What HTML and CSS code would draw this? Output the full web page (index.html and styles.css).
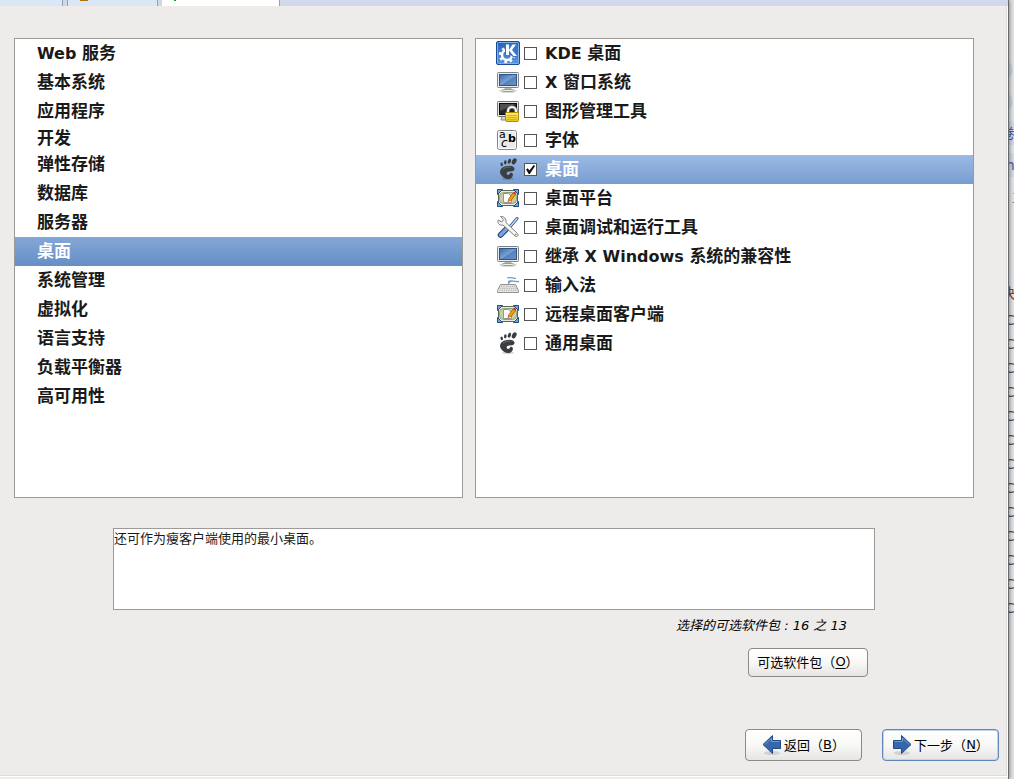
FILE: index.html
```html
<!DOCTYPE html>
<html lang="zh-CN">
<head>
  <meta charset="UTF-8">
  <meta name="viewport" content="width=device-width, initial-scale=1.0">
  <title>软件包选择</title>
  <link rel="stylesheet" href="styles.css">
</head>
<body>
  <!-- 图标 -->
  <svg class="icon-defs" aria-hidden="true">
    <defs>
      <linearGradient id="g-blue" x1="0" y1="0" x2="0" y2="1">
        <stop offset="0" stop-color="#2860b4"/>
        <stop offset="1" stop-color="#5c98dc"/>
      </linearGradient>
      <linearGradient id="g-screen" x1="0" y1="0" x2="1" y2="1">
        <stop offset="0" stop-color="#3a6cae"/>
        <stop offset="0.5" stop-color="#7ba0cf"/>
        <stop offset="0.55" stop-color="#5682bd"/>
        <stop offset="1" stop-color="#6b93c8"/>
      </linearGradient>
      <linearGradient id="g-gold" x1="0" y1="0" x2="0" y2="1">
        <stop offset="0" stop-color="#fdf07a"/>
        <stop offset="1" stop-color="#e6c010"/>
      </linearGradient>
    </defs>

    <symbol id="i-kde" viewBox="0 0 24 24">
      <rect x="0.5" y="0.5" width="23" height="23" rx="1.5" fill="url(#g-blue)" stroke="#1c4a94"/>
      <rect x="1.5" y="1.5" width="21" height="21" rx="1" fill="none" stroke="#84b2e8"/>
      <circle cx="11" cy="14" r="5" fill="none" stroke="#fff" stroke-width="2.4"/>
      <circle cx="11" cy="14" r="7" fill="none" stroke="#fff" stroke-width="2.4" stroke-dasharray="2.6 2.9"/>
      <path d="M9 3h12v13h-4l-3-2.500h-5z" fill="#3c75c4"/>
      <path d="M10 3.500h3v5.500l3.500-5.500h3.500l-4 5.500 5 6h-3.500l-4.500-5.500v4.500h-3z" fill="#fff"/>
    </symbol>

    <symbol id="i-monitor" viewBox="0 0 24 24">
      <ellipse cx="12" cy="21" rx="9" ry="2" fill="#000" opacity="0.14"/>
      <path d="M9 17.500h6l1 2.500H8z" fill="#b4b6b2"/>
      <rect x="6.500" y="19.500" width="11" height="2" rx="1" fill="#eeeeec" stroke="#9a9c98"/>
      <rect x="1.500" y="2.500" width="21" height="15" rx="1" fill="#eeeeec" stroke="#80827c"/>
      <rect x="3.500" y="4.500" width="17" height="11" fill="url(#g-screen)" stroke="#2c5590"/>
    </symbol>

    <symbol id="i-lock" viewBox="0 0 24 24">
      <path d="M6 17h7v4H5z" fill="#d3d5d0" stroke="#858783"/>
      <rect x="1.500" y="2.500" width="21" height="15" rx="1" fill="#e6e7e4" stroke="#73756f"/>
      <rect x="3.500" y="4.500" width="17" height="11" fill="#222625" stroke="#0c0e0d"/>
      <path d="M4 5h16L4 12z" fill="#4c5150"/>
      <path d="M12 14v-2a4 4 0 0 1 8 0v2" fill="none" stroke="#777" stroke-width="3.500"/>
      <path d="M12 14v-2a4 4 0 0 1 8 0v2" fill="none" stroke="#f2f2f0" stroke-width="2"/>
      <rect x="9.500" y="13.500" width="13" height="9" rx="1" fill="url(#g-gold)" stroke="#b58c00"/>
      <path d="M11 16.500h10M11 18.500h10M11 20.500h10" stroke="#d8b41c"/>
    </symbol>

    <symbol id="i-foot" viewBox="0 0 24 24">
      <ellipse cx="12" cy="21.800" rx="6" ry="1.500" fill="#000" opacity="0.160"/>
      <g fill="#3a3e40">
        <ellipse cx="18.200" cy="4.300" rx="2.100" ry="3.300" transform="rotate(28 18.200 4.300)"/>
        <ellipse cx="13.400" cy="4.200" rx="1.500" ry="2.500" transform="rotate(18 13.400 4.200)"/>
        <ellipse cx="9.300" cy="5.400" rx="1.300" ry="2.100" transform="rotate(5 9.300 5.400)"/>
        <ellipse cx="5.700" cy="7.400" rx="1.200" ry="1.900" transform="rotate(-8 5.700 7.400)"/>
        <path d="M18.500 11.800C18.200 8.200 12.500 8 8.500 9.600 4.500 11.200 3 14.500 4.800 17.500c2 3.600 6.700 5.700 9.700 4 2.400-1.400 3.100-4.200 1.800-5.300-1.200-1-2.300 0-2.800 1-.6 1.200-2.200 1-2.700-.2-.5-1.500.6-2.300 2.500-2.500 2.800-.3 5.300-.7 5.200-2.700z"/>
      </g>
      <path d="M7 12.500c1.500-2 4.500-2.700 7.500-2.200" fill="none" stroke="#6a6e70"/>
    </symbol>

    <symbol id="i-desktop" viewBox="0 0 24 24">
      <rect x="2.500" y="4.500" width="19" height="15" fill="#e9ecdf" stroke="#5c6658"/>
      <rect x="3.500" y="6.500" width="17" height="11" rx="4" fill="#c3d0a6" stroke="#8fa075"/>
      <path d="M1.500 3.500h5l-5 5zM22.500 3.500h-5l5 5zM1.500 20.500h5l-5-5zM22.500 20.500h-5l5-5z" fill="#7ba4d6" stroke="#1f4c88"/>
      <path d="M7.500 7.500h5l3 3v6h-8z" fill="#fff" stroke="#94968f"/>
      <path d="M12 15.500l1-3 4-5.500 2.500 1.500-4 5.500z" fill="#f79a1c" stroke="#b85a00" stroke-width="0.800"/>
      <path d="M17 7l2.500 1.500 .8-1.400-2-1.600z" fill="#d92b22"/>
    </symbol>

    <symbol id="i-tools" viewBox="0 0 24 24">
      <path d="M21 3.500l-8 9.500" stroke="#28558f" stroke-width="3" stroke-linecap="round"/>
      <path d="M21 3.500l-8 9.500" stroke="#c6d9ef" stroke-width="1.400" stroke-linecap="round"/>
      <path d="M10 14.500L4.500 20" stroke="#234b80" stroke-width="5.600" stroke-linecap="round"/>
      <path d="M10 14.500L4.500 20" stroke="#7ba5d8" stroke-width="3.400" stroke-linecap="round"/>
      <path d="M4.500 1.500l3 3.300-1.800 2.200-3.500-2C1 8.500 4 11 7 10l12 11c2 1.500 4-.5 2.500-2.500L10 7.500C10.500 4 8 1 4.500 1.500z" fill="#f4f4f2" stroke="#7e807c"/>
      <circle cx="19.800" cy="19.600" r="0.800" fill="#747672"/>
    </symbol>

    <symbol id="i-keyboard" viewBox="0 0 24 24">
      <path d="M11 5c3-1.500 6 1 9 .3M12 8.500c4-2 6 1 11 0M13 11c-1-1.500 0-2 2-2.500" fill="none" stroke="#6c9bd2" stroke-width="1.300"/>
      <path d="M4.500 11.500h15l3 6v2h-21v-2z" fill="#e8e9e6" stroke="#92948f"/>
      <path d="M5 13.300h15M4 15.300h17M3.500 17.300h18" stroke="#a6a8a3" stroke-width="1.100" stroke-dasharray="1.300 0.900"/>
    </symbol>

    <symbol id="i-arrow" viewBox="0 0 20 22">
      <ellipse cx="10" cy="19" rx="8" ry="2" fill="#000" opacity="0.120"/>
      <path d="M1.500 6.500h8v-5l9.500 9-9.500 9v-5h-8z" fill="#3667aa" stroke="#204a87"/>
      <path d="M2.500 7.500h8V4l6.500 6.500" fill="none" stroke="#709ccf"/>
    </symbol>
  </svg>

  <div class="screen">
    <div class="window">
      <div class="tabs" aria-hidden="true">
        <div class="tab tab-first"></div>
        <div class="tab tab-folder"></div>
        <div class="tab tab-active"></div>
      </div>

      <main>
        <div class="panels">
          <!-- 分类 -->
          <nav class="panel">
            <ul class="categories">
              <li><a href="#"><span class="latin">Web </span>服务</a></li>
              <li><a href="#">基本系统</a></li>
              <li><a href="#">应用程序</a></li>
              <li><a href="#" class="short">开发</a></li>
              <li><a href="#">弹性存储</a></li>
              <li><a href="#">数据库</a></li>
              <li><a href="#">服务器</a></li>
              <li><a href="#" class="selected">桌面</a></li>
              <li><a href="#">系统管理</a></li>
              <li><a href="#">虚拟化</a></li>
              <li><a href="#">语言支持</a></li>
              <li><a href="#">负载平衡器</a></li>
              <li><a href="#">高可用性</a></li>
            </ul>
          </nav>

          <!-- 软件包组 -->
          <div class="panel">
            <label class="group"><svg class="icon"><use href="#i-kde"/></svg><input type="checkbox"><span><span class="latin">KDE </span>桌面</span></label>
            <label class="group"><svg class="icon"><use href="#i-monitor"/></svg><input type="checkbox"><span><span class="latin">X </span>窗口系统</span></label>
            <label class="group"><svg class="icon"><use href="#i-lock"/></svg><input type="checkbox"><span>图形管理工具</span></label>
            <label class="group">
              <svg class="icon" viewBox="0 0 24 24">
                <rect x="1.500" y="2.500" width="19" height="19" rx="2" fill="#e9eae7" stroke="#81837f"/>
                <rect x="2.500" y="3.500" width="17" height="17" rx="1" fill="none" stroke="#fff"/>
                <text x="3" y="10" class="glyph-regular">a</text>
                <text x="12" y="14" class="glyph-bold">b</text>
                <text x="5" y="19" class="glyph-slant">c</text>
              </svg>
              <input type="checkbox"><span>字体</span>
            </label>
            <label class="group selected"><svg class="icon"><use href="#i-foot"/></svg><input type="checkbox" checked><span>桌面</span></label>
            <label class="group"><svg class="icon"><use href="#i-desktop"/></svg><input type="checkbox"><span>桌面平台</span></label>
            <label class="group"><svg class="icon"><use href="#i-tools"/></svg><input type="checkbox"><span>桌面调试和运行工具</span></label>
            <label class="group"><svg class="icon"><use href="#i-monitor"/></svg><input type="checkbox"><span>继承<span class="latin"> X Windows </span>系统的兼容性</span></label>
            <label class="group"><svg class="icon"><use href="#i-keyboard"/></svg><input type="checkbox"><span>输入法</span></label>
            <label class="group"><svg class="icon"><use href="#i-desktop"/></svg><input type="checkbox"><span>远程桌面客户端</span></label>
            <label class="group"><svg class="icon"><use href="#i-foot"/></svg><input type="checkbox"><span>通用桌面</span></label>
          </div>
        </div>

        <div class="details">
          <div class="description">还可作为瘦客户端使用的最小桌面。</div>
          <p class="count">选择的可选软件包 : 16 之 13</p>
          <button type="button" class="btn btn-optional">可选软件包（<u>O</u>）</button>
        </div>

        <div class="actions">
          <button type="button" class="btn"><svg class="arrow arrow-back"><use href="#i-arrow"/></svg>返回（<u>B</u>）</button>
          <button type="button" class="btn btn-default"><svg class="arrow"><use href="#i-arrow"/></svg>下一步（<u>N</u>）</button>
        </div>
      </main>
    </div>

    <!-- 窗口后面的页面边缘 -->
    <aside class="behind">
      <div class="dot"></div>
      <div class="dot"></div>
      <div class="edge-link">卷</div>
      <div class="edge-link edge-m">m</div>
      <div class="edge-red">主</div>
      <div class="edge-brown">快</div>
      <ul class="edge-list">
        <li>C</li>
        <li>C</li>
        <li>C</li>
        <li>C</li>
        <li>C</li>
        <li>C</li>
        <li>C</li>
        <li>C</li>
        <li>C</li>
        <li>C</li>
        <li>C</li>
        <li>C</li>
        <li>C</li>
      </ul>
    </aside>
  </div>
</body>
</html>
```

FILE: styles.css
```css
/* 全局样式 */
* {
  box-sizing: border-box;
}
body {
  margin: 0;
  background-color: #edeceb;
  font-family: "DejaVu Sans", "Noto Sans CJK SC", sans-serif;
  font-size: 13px;
  color: #1a1a1a;
}
.icon-defs {
  position: absolute;
  width: 0;
  height: 0;
}
.screen {
  display: flex;
  min-height: 100vh;
}
.window {
  flex: 1;
  display: flex;
  flex-direction: column;
  border-right: 1px solid #666a6c;
  box-shadow: 1px 0 4px rgba(0, 0, 0, 0.4);
  z-index: 1;
}

/* 顶部标签 */
.tabs {
  display: flex;
  height: 6px;
  background-color: #d2d8ec;
}
.tab {
  background-color: #dce7f5;
  border-right: 1px solid #8ba3be;
}
.tab-first {
  width: 63px;
  margin-right: 4px;
}
.tab-folder {
  width: 91px;
  margin-right: 4px;
  padding-left: 12px;
  border-left: 1px solid #8ba3be;
}
.tab-folder::before {
  content: "";
  display: block;
  width: 8px;
  height: 1px;
  background-color: #ad7410;
}
.tab-active {
  width: 118px;
  padding-left: 12px;
  background-color: #fff;
}
.tab-active::before {
  content: "";
  display: block;
  width: 2px;
  height: 1px;
  background-color: #14a014;
}

/* 主要内容区域 */
main {
  flex: 1;
  display: flex;
  flex-direction: column;
  margin-bottom: 2px;
  padding: 32px 8px 15px 14px;
  border-right: 1px solid #fff;
  border-bottom: 1px solid #fff;
  box-shadow: inset -1px -1px #dddddb;
}
.panels {
  display: grid;
  grid-template-columns: 9fr 10fr;
  gap: 12px;
  margin-right: 25px;
}
.panel {
  min-height: 460px;
  background-color: #fff;
  border: 1px solid #9c9997;
  font-size: 17px;
  font-weight: bold;
}
.latin {
  font-size: 16px;
  white-space: pre;
}
.categories {
  list-style: none;
  margin: 0;
  padding: 0;
}
.categories a {
  display: block;
  height: 29px;
  padding-left: 22px;
  line-height: 28px;
  color: inherit;
  text-decoration: none;
}
.categories .short {
  height: 24px;
  line-height: 24px;
}
.categories .selected {
  background: linear-gradient(#84a7d8, #658fc4);
  color: #fff;
}
.group {
  display: flex;
  align-items: flex-start;
  height: 29px;
  padding: 2px 0 0 20px;
  line-height: 24px;
}
.group.selected {
  background: linear-gradient(#9bbae5, #789dd0);
  color: #fff;
}
.icon {
  width: 24px;
  height: 24px;
  margin-right: 4px;
}
.glyph-regular {
  font: 11px "DejaVu Sans", sans-serif;
}
.glyph-bold {
  font: bold 11px "DejaVu Sans", sans-serif;
}
.glyph-slant {
  font: italic 12px "DejaVu Sans", sans-serif;
}
.group input {
  appearance: none;
  width: 13px;
  height: 13px;
  margin: 6px 8px 0 0;
  border: 1px solid #555;
  background-color: #fff;
}
.group input:checked::before {
  content: "";
  display: block;
  width: 9px;
  height: 9px;
  margin: 1px;
  background-color: #111;
  clip-path: polygon(0 50%, 18% 36%, 38% 62%, 84% 0, 100% 10%, 42% 100%, 30% 100%);
}

/* 说明 */
.details {
  display: flex;
  flex-direction: column;
  align-items: flex-end;
  margin: 30px 124px 0 99px;
}
.description {
  width: 100%;
  min-height: 82px;
  background-color: #fff;
  border: 1px solid #9c9997;
  line-height: 19px;
}
.count {
  margin: 6px 28px 12px 0;
  line-height: 20px;
  font-style: italic;
  color: #000;
}

/* 按钮 */
.btn {
  display: flex;
  align-items: center;
  justify-content: center;
  min-width: 117px;
  height: 32px;
  padding: 0 0 2px;
  border: 1px solid #8c8986;
  border-radius: 4px;
  background: linear-gradient(#fff, #f8f8f7 50%, #e6e5e3);
  font-family: inherit;
  font-size: 13px;
  color: #000;
}
.btn u {
  text-underline-offset: 2px;
}
.btn-optional {
  min-width: 120px;
  height: 29px;
  margin-right: 7px;
}
.btn-default {
  border-color: #5f86b8;
  box-shadow: inset 0 0 0 1px #c4d4e8;
}
.actions {
  display: flex;
  justify-content: flex-end;
  gap: 20px;
  margin-top: auto;
}
.arrow {
  width: 20px;
  height: 22px;
  margin: 2px 2px 0 0;
}
.arrow-back {
  transform: scaleX(-1);
}

/* 右侧边缘 */
.behind {
  width: 5px;
  padding-top: 60px;
  overflow: hidden;
  background-color: #e2e4e6;
  font-size: 14px;
  line-height: 24px;
}
.dot {
  width: 20px;
  height: 20px;
  margin: 0 0 12px -16px;
  border-radius: 50%;
  background-color: #cfd4e2;
}
.edge-link {
  margin: -3px 0 8px -8px;
  width: 20px;
  background-color: #d3dce8;
  color: #4860a0;
}
.edge-m {
  margin-top: 0;
}
.edge-red {
  margin-left: 3px;
  color: #a85a4a;
}
.edge-brown {
  width: 20px;
  margin: 72px 0 3px -8px;
  color: #7a4428;
}
.edge-list {
  list-style: none;
  margin: 0 0 0 -4px;
  padding: 0;
  color: #555;
}
```
